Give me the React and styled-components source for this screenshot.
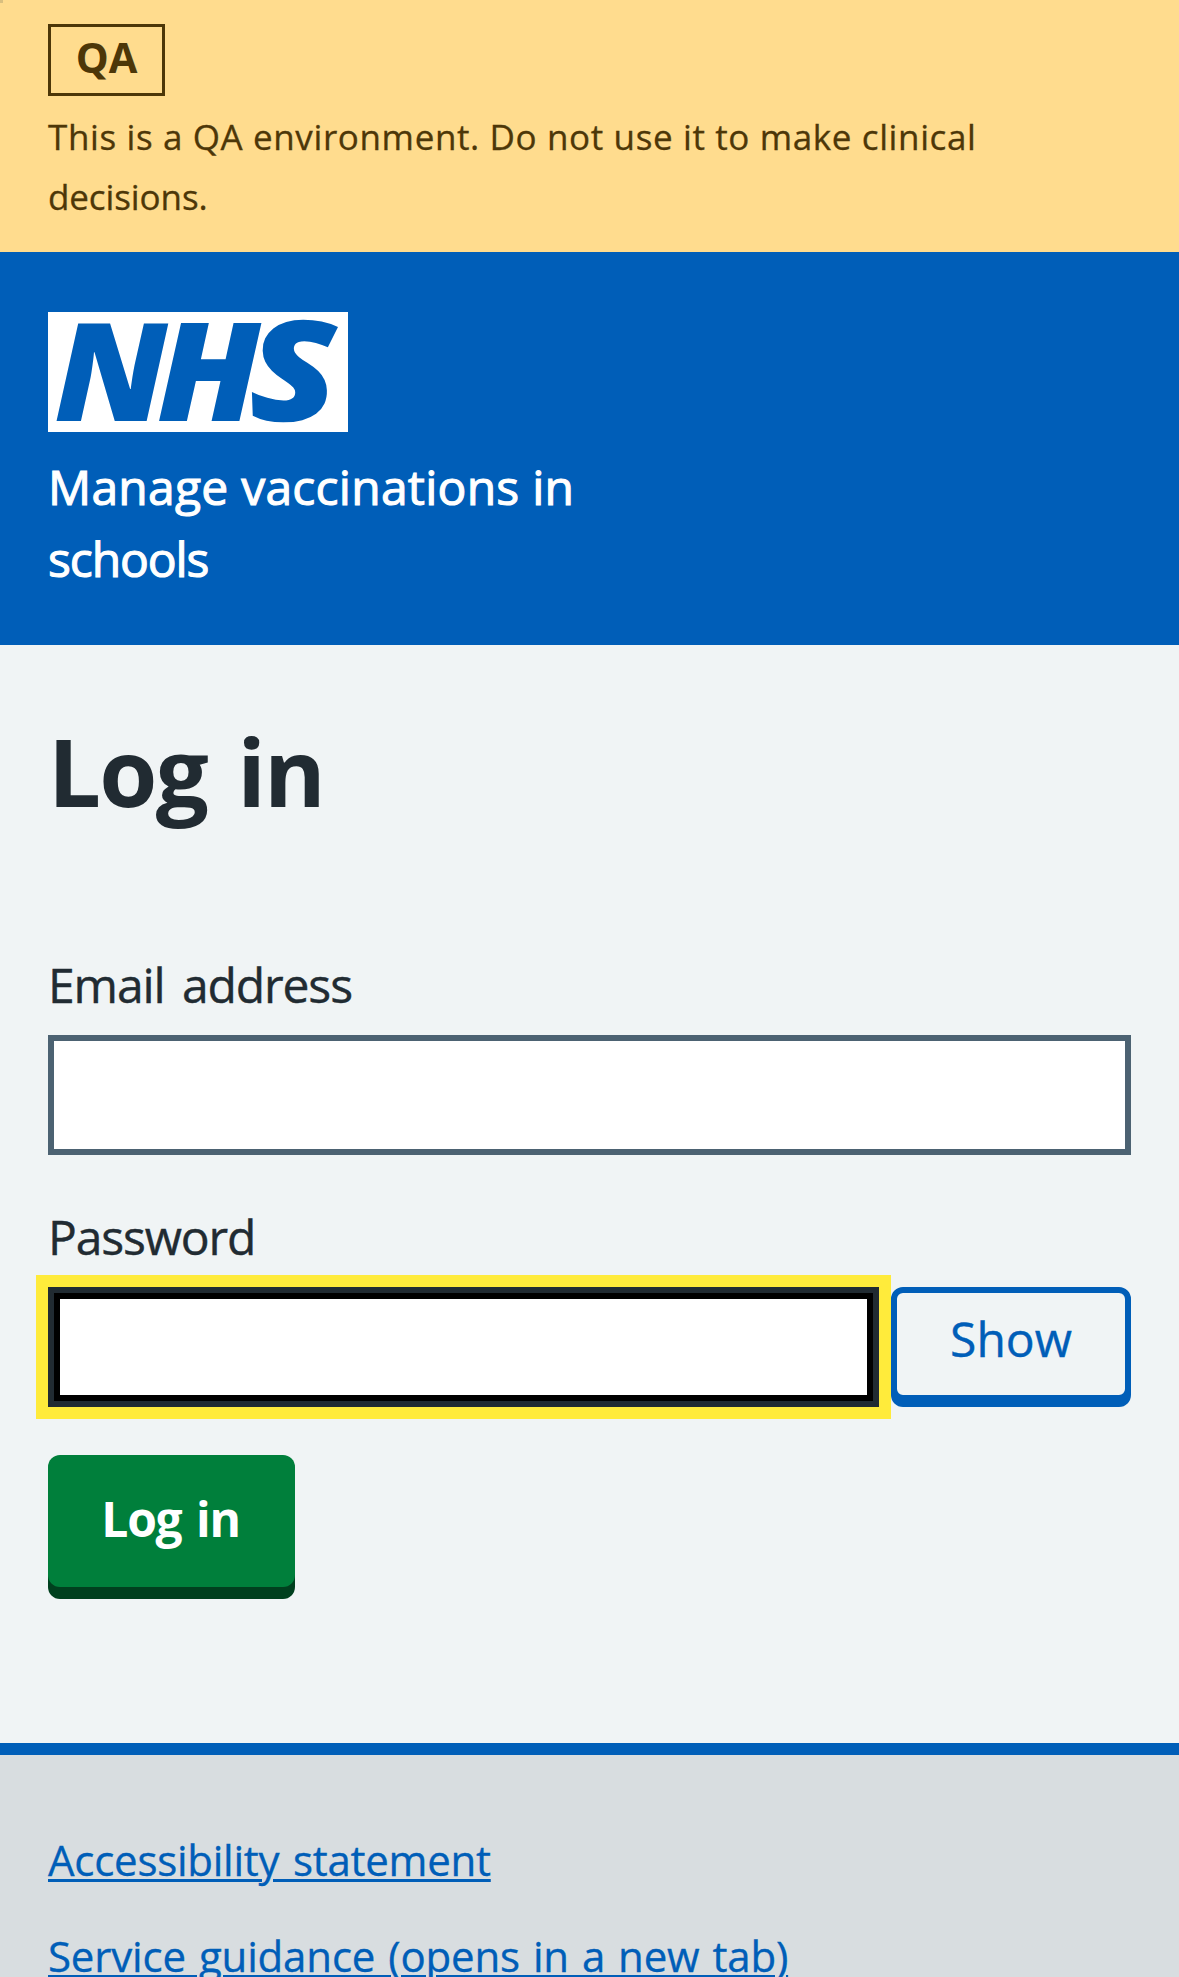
import React from "react";
import styled, { createGlobalStyle } from "styled-components";

const blue = "#005eb8";
const ink = "#212b32";

const GlobalStyle = createGlobalStyle`
  *, *::before, *::after { box-sizing: border-box; }
  body {
    margin: 0;
    background: #f0f4f5;
    color: ${ink};
    font-family: "Open Sans", "Noto Sans", Arial, sans-serif;
  }
`;

const Page = styled.div`
  position: relative;
  height: 1977px;
  overflow: hidden;
`;

const SkipLink = styled.a`
  position: absolute;
  top: 0;
  left: 0;
  width: 3px;
  height: 3px;
  overflow: hidden;
  background: #d9bf7f;
`;

const Tracked = styled.span`
  letter-spacing: ${(p) => p.$letter || 0}px;
  word-spacing: ${(p) => p.$word || 0}px;
`;

const Banner = styled.div`
  height: 252px;
  padding: 24px 48px 0;
  background: #ffdc8e;
  color: #4d3708;
`;

const Tag = styled.strong`
  display: flex;
  justify-content: center;
  width: 117px;
  height: 72px;
  border: 3px solid currentColor;
  font-size: 41.5px;
  line-height: 60px;
  font-weight: 700;
`;

const BannerText = styled.p`
  margin: 11px 0 0;
  font-size: 35px;
  line-height: 60px;
  -webkit-text-stroke: 0.3px currentColor;
`;

const Header = styled.header`
  height: 393px;
  padding: 60px 48px 0;
  background: ${blue};
  color: #fff;
`;

const Logo = styled.svg`
  display: block;
  width: 300px;
  height: 120px;
  overflow: visible;
  font: italic 800 136px "Open Sans", "Noto Sans", sans-serif;
`;

const ServiceName = styled.div`
  margin-top: 19px;
  width: 560px;
  font-size: 48px;
  line-height: 72px;
  font-weight: 500;
  -webkit-text-stroke: 1.1px currentColor;
`;

const Main = styled.main`
  height: 1098px;
  padding: 72px 48px 0;
`;

const Title = styled.h1`
  margin: 0;
  font-size: 94px;
  line-height: 108px;
  font-weight: 700;
`;

const Field = styled.div`
  margin-top: ${(p) => p.$gap}px;
`;

const Label = styled.label`
  display: block;
  height: 86px;
  font-size: 48px;
  line-height: 72px;
  -webkit-text-stroke: 0.4px currentColor;
`;

const FieldRow = styled.div`
  display: flex;
  gap: 12px;
`;

const Input = styled.input`
  display: block;
  flex: 1;
  width: 100%;
  min-width: 0;
  height: 120px;
  padding: 12px;
  border: 6px solid ${(p) => (p.$focused ? ink : "#4c6272")};
  border-radius: 0;
  outline: ${(p) => (p.$focused ? "12px solid #ffeb3b" : "none")};
  box-shadow: ${(p) => (p.$focused ? "inset 0 0 0 6px #000" : "none")};
  background: #fff;
  font: 48px "Open Sans", sans-serif;
`;

const ShowButton = styled.button`
  width: 240px;
  height: 114px;
  padding: 0 0 10px;
  border: 6px solid ${blue};
  border-radius: 12px;
  box-shadow: 0 6px 0 ${blue};
  background: #f0f4f5;
  color: ${blue};
  font: 400 48px/72px "Open Sans", "Noto Sans", sans-serif;
  -webkit-text-stroke: 0.4px currentColor;
`;

const SubmitButton = styled.button`
  display: block;
  width: 247px;
  height: 132px;
  margin-top: 48px;
  padding: 0 2px 5px 0;
  border: 0;
  border-radius: 12px;
  box-shadow: 0 12px 0 #00401e;
  background: #007f3b;
  color: #fff;
  font: 700 48px/72px "Open Sans", "Noto Sans", sans-serif;
`;

const Footer = styled.footer`
  height: 400px;
  padding: 69px 48px 0;
  border-top: 12px solid ${blue};
  background: #d8dde0;
`;

const FooterLink = styled.a`
  display: block;
  width: max-content;
  height: 96px;
  color: ${blue};
  font-size: 42px;
  line-height: 72px;
  text-decoration: underline;
  text-decoration-thickness: 3px;
  text-underline-offset: 3px;
  -webkit-text-stroke: 0.35px currentColor;
`;

export default function App() {
  return (
    <Page>
      <GlobalStyle />
      <Banner>
        <Tag>QA</Tag>
        <BannerText>
          <Tracked $letter={0.62}>
            This is a QA environment. Do not use it to make clinical
          </Tracked>
          <br />
          <Tracked $letter={-0.1}>decisions.</Tracked>
        </BannerText>
      </Banner>
      <SkipLink href="#main" aria-label="Skip to main content" />
      <Header>
        <Logo viewBox="0 0 300 120" role="img" aria-label="NHS">
          <rect width="300" height="120" fill="#fff" />
          <g fill={blue}>
            <text transform="translate(6.3 108.7) scale(1.055 1)">N</text>
            <text transform="translate(108.8 108.7) scale(1.07 1)">H</text>
            <text transform="translate(201.5 108.9) skewX(2) scale(1.21 1.03)">S</text>
          </g>
        </Logo>
        <ServiceName>
          <Tracked $letter={0.25}>Manage vaccinations in</Tracked>
          <br />
          <Tracked $letter={-1.1}>schools</Tracked>
        </ServiceName>
      </Header>
      <Main id="main">
        <Title>
          <Tracked $letter={-1.8} $word={7.5}>Log in</Tracked>
        </Title>
        <Field $gap={124}>
          <Label htmlFor="email">
            <Tracked $letter={-1.1} $word={6}>Email address</Tracked>
          </Label>
          <Input id="email" type="email" />
        </Field>
        <Field $gap={46}>
          <Label htmlFor="password">
            <Tracked $letter={-1.15}>Password</Tracked>
          </Label>
          <FieldRow>
            <Input id="password" type="password" $focused />
            <ShowButton type="button">Show</ShowButton>
          </FieldRow>
        </Field>
        <SubmitButton type="submit">
          <Tracked $letter={-1.3} $word={3.5}>Log in</Tracked>
        </SubmitButton>
      </Main>
      <Footer>
        <FooterLink href="#accessibility">
          <Tracked $letter={-0.25} $word={3}>Accessibility statement</Tracked>
        </FooterLink>
        <FooterLink href="#guidance">
          <Tracked $letter={-0.16} $word={2.2}>
            Service guidance (opens in a new tab)
          </Tracked>
        </FooterLink>
      </Footer>
    </Page>
  );
}
